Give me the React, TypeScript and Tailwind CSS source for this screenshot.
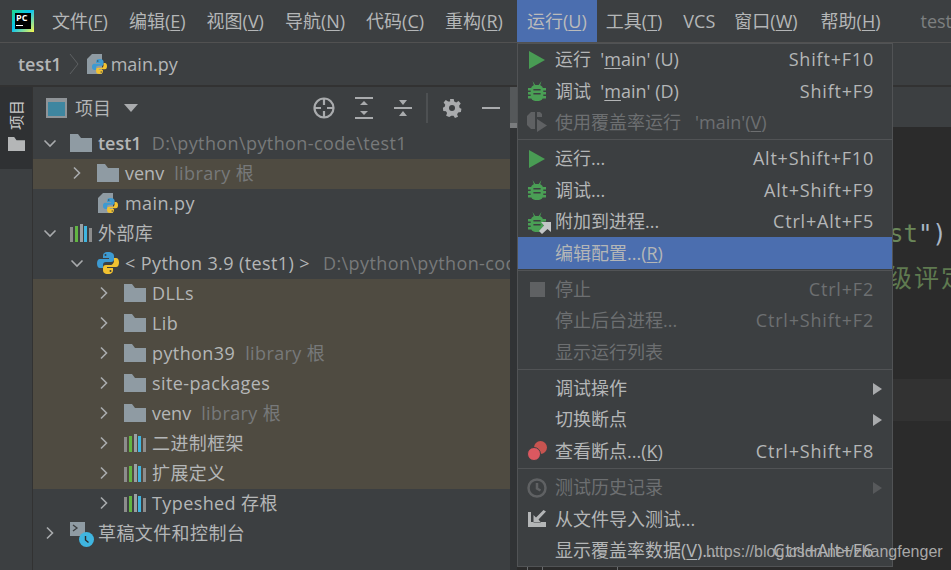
import type { ReactNode } from "react";

const FONT = "font-['Open_Sans','Noto_Sans_CJK_SC',sans-serif]";

function Chevron({ open }: { open?: boolean }) {
  return (
    <svg width="14" height="14" viewBox="0 0 14 14" className="shrink-0 text-[#a9abad]" fill="none" stroke="currentColor" strokeWidth="1.6">
      {open ? <path d="M1.5 4.5 7 10l5.5-5.5" /> : <path d="M4 1.5 9.5 7 4 12.5" />}
    </svg>
  );
}

function Folder() {
  return (
    <svg width="22" height="18" viewBox="0 0 22 18" className="shrink-0">
      <path d="M0 0h8l3 4h11v14H0z" fill="#8f9ba3" />
    </svg>
  );
}

function LibraryBars() {
  return (
    <svg width="22" height="18" viewBox="0 0 22 18" className="shrink-0">
      <rect x="0" y="3" width="3" height="15" fill="#8c8c8c" />
      <rect x="5" y="2" width="3" height="16" fill="#62b543" />
      <rect x="10" y="0" width="3" height="18" fill="#9aa0a3" />
      <rect x="14" y="2" width="3" height="16" fill="#3fb5e0" />
      <rect x="19" y="4" width="3" height="14" fill="#8c8c8c" />
    </svg>
  );
}

function PythonLogo({ size = 22 }: { size?: number }) {
  return (
    <svg width={size} height={size} viewBox="0 0 22 22" className="shrink-0">
      <path d="M11 0C7 0 6 2 6 4v2h6v1H3C1 7 0 9 0 11.500S1 16 3 16h3v-3c0-2 1-3 3-3h5c2 0 3-1 3-3V4c0-2-2-4-6-4z" fill="#3d9ad1" />
      <path d="M11 22c4 0 5-2 5-4v-2h-6v-1h9c2 0 3-2 3-4.500S21 6 19 6h-2v3c0 2-2 4-3 4H9c-2 0-3 1-3 3v2c0 2 1 4 5 4z" fill="#f2c230" />
      <circle cx="8.500" cy="3" r="1" fill="#3c3f41" />
      <circle cx="13.500" cy="19" r="1" fill="#3c3f41" />
    </svg>
  );
}

function PyFile() {
  return (
    <span className="relative block h-[20px] w-[20px] shrink-0">
      <svg width="15" height="20" viewBox="0 0 15 20" className="absolute left-0 top-0">
        <path d="M5 0h10v20H0V5z" fill="#8f9ba3" />
      </svg>
      <span className="absolute left-[5px] top-[5px]">
        <PythonLogo size={15} />
      </span>
    </span>
  );
}

function Tree({ indent, open, chevron = true, icon, tint, children }: {
  indent: number;
  open?: boolean;
  chevron?: boolean;
  icon: ReactNode;
  tint?: boolean;
  children: ReactNode;
}) {
  return (
    <div className={`flex h-[30px] items-center overflow-hidden whitespace-nowrap pb-[2px] tracking-[0.4px] ${tint ? "bg-[#4f4b41]" : ""}`}>
      <span className="w-[10px] shrink-0" style={{ marginLeft: indent }} />
      <span className="w-[14px] shrink-0">{chevron && <Chevron open={open} />}</span>
      <span className="ml-[13px] mr-[6px] flex w-[22px] shrink-0 justify-center">{icon}</span>
      {children}
    </div>
  );
}

function Hint({ children, wide }: { children: ReactNode; wide?: boolean }) {
  return <span className={`text-[#77797a] ${wide ? "ml-[13px]" : "ml-[10px]"}`}>{children}</span>;
}

function Key({ children }: { children: string }) {
  return <span className="underline underline-offset-2">{children}</span>;
}

function TopMenu() {
  const items = [
    ["文件(", "F", ")"],
    ["编辑(", "E", ")"],
    ["视图(", "V", ")"],
    ["导航(", "N", ")"],
    ["代码(", "C", ")"],
    ["重构(", "R", ")"],
  ];
  return (
    <div className="flex h-[43px] items-center overflow-hidden whitespace-nowrap border-b border-[#515151] text-[18px] text-[#b4b6b7]">
      <div className="ml-[12px] mr-[18px] flex h-[22px] w-[22px] shrink-0 items-start bg-[linear-gradient(135deg,#21d789,#07c3f2_45%,#fcf84a)] p-[3px]">
        <div className="flex h-full w-full flex-col bg-black px-[1px] text-[9px] font-bold leading-[10px] text-white">
          PC
          <span className="mt-[2px] h-[1px] w-[7px] bg-white" />
        </div>
      </div>
      <div className="flex shrink-0 gap-[21px]">
        {items.map(([a, k, b]) => (
          <span key={a}>{a}<Key>{k}</Key>{b}</span>
        ))}
      </div>
      <span className="ml-[14px] flex h-full w-[80px] shrink-0 items-center justify-center bg-[#4b6eaf] text-[#bbbbbb]">
        运行(<Key>U</Key>)
      </span>
      <div className="ml-[9px] flex shrink-0">
        <span>工具(<Key>T</Key>)</span>
        <span className="ml-[21px]">VCS</span>
        <span className="ml-[19px]">窗口(<Key>W</Key>)</span>
        <span className="ml-[23px]">帮助(<Key>H</Key>)</span>
      </div>
      <span className="ml-[40px] shrink-0 text-[#7d7f80]">test</span>
    </div>
  );
}

function ProjectPanel() {
  return (
    <div className="flex min-w-0 flex-1 flex-col text-[18px] text-[#b4b6b7]">
      <div className="flex h-[42px] items-center pl-[13px] pr-[10px]">
        <span className="block h-[20px] w-[21px] border-2 border-t-4 border-[#8f9498] bg-[#3e86a0]" />
        <span className="ml-[8px]">项目</span>
        <svg width="14" height="8" viewBox="0 0 14 8" className="ml-[13px] fill-[#a9abad]"><path d="M0 0h14L7 8z" /></svg>
        <svg width="22" height="22" viewBox="0 0 22 22" className="ml-auto" fill="none" stroke="#a9abad" strokeWidth="2.200">
          <circle cx="11" cy="11" r="9.500" />
          <path d="M11 1v7M11 14v7M1 11h7M14 11h7" />
        </svg>
        <svg width="18" height="22" viewBox="0 0 18 22" className="ml-[20px] fill-[#a9abad]">
          <path d="M0 0h18v2H0zM0 20h18v2H0zM9 4l4 4H5zM9 18l-4-4h8z" />
        </svg>
        <svg width="18" height="22" viewBox="0 0 18 22" className="ml-[21px] fill-[#a9abad]">
          <path d="M0 10h18v2H0zM9 8 5 3h8zM9 14l4 5H5z" />
        </svg>
        <span className="ml-[14px] h-[30px] w-[2px] bg-[#4d5052]" />
        <svg width="20" height="20" viewBox="0 0 20 20" className="ml-[14px]">
          <path d="M8 0h4l.6 3 2.200 1 2.600-1.600 2.400 2.800-1.800 2.400.6 2.400 2 1-.6 3.600-3 .4-1.200 2 1 2.800-3.400 1.400-1.600-2.400h-2.400L7 20l-3.400-1.400 1-2.800-1.200-2-3-.4L0 9.800l2-1 .6-2.400L.8 4 3.200 1.200l2.600 1.600L8 3z" fill="#a9abad" transform="scale(.9) translate(1 1)" />
          <circle cx="10" cy="10" r="3" fill="#3c3f41" />
        </svg>
        <span className="ml-[20px] h-[2.500px] w-[18px] bg-[#a9abad]" />
      </div>
      <Tree indent={0} open icon={<Folder />}>
        <span className="font-semibold tracking-normal">test1</span><Hint>D:\python\python-code\test1</Hint>
      </Tree>
      <Tree indent={27} tint icon={<Folder />}><span className="tracking-normal">venv</span><Hint>library 根</Hint></Tree>
      <Tree indent={27} chevron={false} icon={<PyFile />}>main.py</Tree>
      <Tree indent={0} open icon={<LibraryBars />}>外部库</Tree>
      <Tree indent={27} open icon={<PythonLogo />}>
        &lt; Python 3.9 (test1) &gt;<Hint wide>D:\python\python-code</Hint>
      </Tree>
      <Tree indent={54} tint icon={<Folder />}>DLLs</Tree>
      <Tree indent={54} tint icon={<Folder />}>Lib</Tree>
      <Tree indent={54} tint icon={<Folder />}>python39<Hint>library 根</Hint></Tree>
      <Tree indent={54} tint icon={<Folder />}>site-packages</Tree>
      <Tree indent={54} tint icon={<Folder />}><span className="tracking-normal">venv</span><Hint>library 根</Hint></Tree>
      <Tree indent={54} tint icon={<LibraryBars />}>二进制框架</Tree>
      <Tree indent={54} tint icon={<LibraryBars />}>扩展定义</Tree>
      <Tree indent={54} icon={<LibraryBars />}>Typeshed 存根</Tree>
      <Tree indent={0} icon={
        <span className="relative block h-[22px] w-[22px]">
          <span className="absolute left-0 top-0 h-[14px] w-[15px] bg-[#8f9ba3]" />
          <svg width="7" height="8" viewBox="0 0 7 8" className="absolute left-[2px] top-[2px]" fill="none" stroke="#3c3f41" strokeWidth="1.300"><path d="M1 1l4 3-4 3" /></svg>
          <span className="absolute bottom-[-3px] right-[-2px] flex h-[15px] w-[15px] items-center justify-center rounded-full bg-[#3fb5e0]">
            <svg width="9" height="9" viewBox="0 0 9 9" fill="none" stroke="#2b2b2b" strokeWidth="1.400"><path d="M3.500 1v4l3 2.500" /></svg>
          </span>
        </span>
      }>草稿文件和控制台</Tree>
    </div>
  );
}

function Play() {
  return <svg width="16" height="18" viewBox="0 0 16 18"><path d="M0 0l16 9-16 9z" fill="#499c54" /></svg>;
}

function Bug({ attach }: { attach?: boolean }) {
  return (
    <span className="relative block h-[20px] w-[18px]">
      <svg width="18" height="20" viewBox="0 0 20 20" preserveAspectRatio="none" fill="#4a9f55">
        <rect x="3" y="4" width="14" height="16" rx="5" />
        <path d="M5 0l3.500 4.500-1.500 1zM15 0l-3.500 4.500 1.500 1zM0 7h4v2.500H0zM16 7h4v2.500h-4zM0 11h4v2.500H0zM16 11h4v2.500h-4zM0 15h4v2.500H0zM16 15h4v2.500h-4z" />
        <path d="M6 8h8v1.500H6zM6 12h8v1.500H6z" fill="#3c3f41" />
      </svg>
      {attach && (
        <svg width="12" height="12" viewBox="0 0 12 12" className="absolute bottom-[-2px] right-[-5px]">
          <path d="M2 0h10v10L8.500 7 3 12 0 9l5-5.500z" fill="#c4c6c8" />
        </svg>
      )}
    </span>
  );
}

function MenuRow({ icon, label, shortcut, disabled, active, arrow }: {
  icon?: ReactNode;
  label: ReactNode;
  shortcut?: string;
  disabled?: boolean;
  active?: boolean;
  arrow?: boolean;
}) {
  return (
    <div className={`flex h-[31.4px] items-center whitespace-nowrap pl-[8px] pr-[18px] ${active ? "bg-[#4b6eaf]" : ""} ${disabled ? "text-[#6d6f71]" : "text-[#b4b6b7]"}`}>
      <span className="flex w-[29px] shrink-0 justify-center pr-[7px]">{icon}</span>
      <span>{label}</span>
      {shortcut && <span className="ml-auto tracking-[0.8px]">{shortcut}</span>}
      {arrow && (
        <svg width="9" height="12" viewBox="0 0 9 12" className={`ml-auto mr-[-8px] ${disabled ? "fill-[#57595b]" : "fill-[#a9abad]"}`}><path d="M0 0l9 6-9 6z" /></svg>
      )}
    </div>
  );
}

function RunMenu() {
  const line = <div className="mb-[3px] mt-[1px] h-[1px] bg-[#515355]" />;
  return (
    <div className="absolute left-[517px] top-[43px] z-10 w-[376px] border border-[#515355] bg-[#3c3f41] text-[18px]">
      <MenuRow icon={<Play />} label={<>运行 &nbsp;'<Key>m</Key>ain' (U)</>} shortcut="Shift+F10" />
      <MenuRow icon={<Bug />} label={<>调试 &nbsp;'<Key>m</Key>ain' (D)</>} shortcut="Shift+F9" />
      <MenuRow disabled icon={
        <svg width="22" height="22" viewBox="0 0 22 22">
          <path d="M9 1H5L1 5v9l4 4h4z" fill="#5f6163" />
          <path d="M11 8l10 6.500L11 21z" fill="#5f6163" />
          <path d="M11 1h3l2 2v3h-5z" fill="#5f6163" />
        </svg>
      } label={<>使用覆盖率运行 &nbsp;&nbsp;'main'(<Key>V</Key>)</>} />
      {line}
      <MenuRow icon={<Play />} label="运行..." shortcut="Alt+Shift+F10" />
      <MenuRow icon={<Bug />} label="调试..." shortcut="Alt+Shift+F9" />
      <MenuRow icon={<Bug attach />} label="附加到进程..." shortcut="Ctrl+Alt+F5" />
      <MenuRow active label={<>编辑配置...(<Key>R</Key>)</>} />
      {line}
      <MenuRow disabled icon={<span className="block h-[15px] w-[15px] bg-[#5f6163]" />} label="停止" shortcut="Ctrl+F2" />
      <MenuRow disabled label="停止后台进程..." shortcut="Ctrl+Shift+F2" />
      <MenuRow disabled label="显示运行列表" />
      {line}
      <MenuRow label="调试操作" arrow />
      <MenuRow label="切换断点" arrow />
      <MenuRow icon={
        <span className="relative block h-[20px] w-[20px]">
          <span className="absolute right-0 top-0 h-[13px] w-[13px] rounded-full bg-[#c75450]" />
          <span className="absolute bottom-0 left-0 h-[14px] w-[14px] rounded-full border border-[#3c3f41] bg-[#db5860]" />
        </span>
      } label={<>查看断点...(<Key>K</Key>)</>} shortcut="Ctrl+Shift+F8" />
      {line}
      <MenuRow disabled arrow icon={
        <svg width="20" height="20" viewBox="0 0 20 20" fill="none" stroke="#5f6163" strokeWidth="2.500"><circle cx="10" cy="10" r="8.500" /><path d="M10 5v5.500l3.500 2" /></svg>
      } label="测试历史记录" />
      <MenuRow icon={
        <svg width="18" height="18" viewBox="0 0 18 18" fill="#b4b6b7"><path d="M0 2h3v10h15v5H0zM18 1.500 15.500 0 8 7.500 5.500 5v7.500H13L10.500 9.500z" /></svg>
      } label="从文件导入测试..." />
      <MenuRow label={<>显示覆盖率数据(<Key>V</Key>)...</>} shortcut="Ctrl+Alt+F6" />
    </div>
  );
}

export default function App() {
  return (
    <div className={`relative h-[570px] w-[951px] overflow-hidden bg-[#3c3f41] ${FONT}`}>
      <TopMenu />
      <div className="flex h-[44px] items-center border-b-2 border-[#323232] pl-[18px] text-[18px] text-[#b4b6b7]">
        <span className="font-semibold">test1</span>
        <svg width="10" height="22" viewBox="0 0 10 22" className="ml-[7px] mr-[8px]" fill="none" stroke="#5e6163" strokeWidth="1"><path d="M1 1l8 10-8 10" /></svg>
        <PyFile />
        <span className="ml-[4px]">main.py</span>
      </div>
      <div className="flex h-[483px]">
        <div className="w-[33px] shrink-0 border-r border-[#323232]">
          <div className="flex h-[82px] flex-col items-center bg-[#2f3133] pt-[13px]">
            <span className="rotate-180 text-[15px] leading-[17px] text-[#c8c8c8] [text-orientation:sideways] [writing-mode:vertical-rl]">项目</span>
            <svg width="17" height="14" viewBox="0 0 22 18" className="mt-[7px]"><path d="M0 0h8l3 4h11v14H0z" fill="#b4b6b7" /></svg>
          </div>
        </div>
        <ProjectPanel />
        <div className="flex w-[7px] shrink-0 flex-col bg-[#313335]">
          <div className="h-[36px] bg-[#55585a]" />
          <div className="h-[5px] bg-[#7a7c7e]" />
        </div>
        <div className="flex w-[434px] shrink-0 flex-col">
          <div className="h-[40px] bg-[#3c3f41]" />
          <div className="relative flex-1 bg-[#2b2b2b]">
            <span className="absolute left-[372px] top-[92px] font-['DejaVu_Sans_Mono',monospace] text-[24px] leading-[30px] text-[#6a8759]">st<span className="text-[#a9b7c6]">")</span></span>
            <span className="absolute left-[370px] top-[134px] whitespace-nowrap font-['Noto_Sans_CJK_SC',sans-serif] text-[25px] leading-[30px] tracking-[2px] text-[#5f7a50]">级评定</span>
            <div className="absolute left-[376px] right-0 top-[252px] h-[42px] bg-[#323232]" />
            <div className="absolute bottom-0 left-[10px] h-[4px] w-[1px] bg-[#6a6c6e]" />
            <div className="absolute bottom-0 left-[25px] h-[4px] w-[1px] bg-[#6a6c6e]" />
            <div className="absolute bottom-0 left-[100px] h-[4px] w-[1px] bg-[#6a6c6e]" />
          </div>
        </div>
      </div>
      <RunMenu />
      <span className="absolute left-[706px] top-[542px] z-20 font-['Liberation_Sans',sans-serif] text-[16px] leading-[20px] text-[#a8a8a8]">https://blog.csdn.net/zhangfenger</span>
    </div>
  );
}
